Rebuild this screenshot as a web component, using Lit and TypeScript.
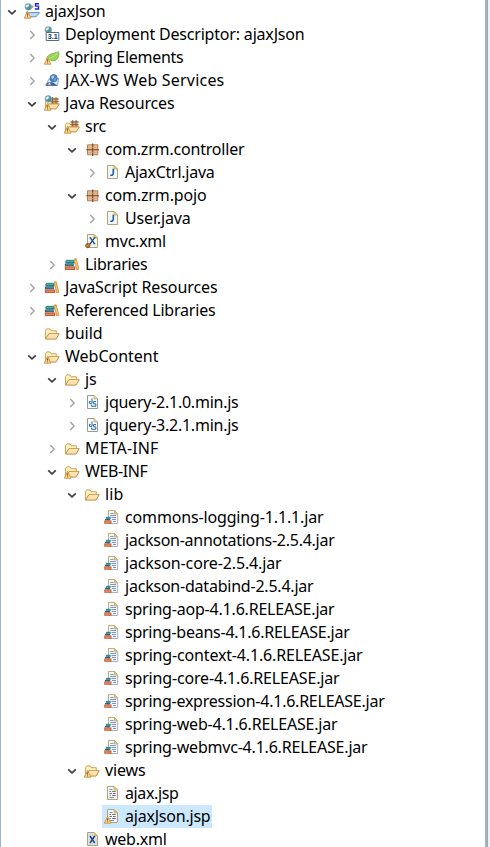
import { LitElement, html, svg, css } from "lit";
import { customElement, property } from "lit/decorators.js";
import { classMap } from "lit/directives/class-map.js";

const warn = svg`<path d="M3.6 8.4 L7 15.2 H.3 Z" fill="#ffd890" stroke="#cf9040" stroke-width=".9" stroke-linejoin="round"/><path d="M3.6 10.3v2.4M3.6 13.4v1" stroke="#8a5314" stroke-width="1"/>`;

const globe = svg`<circle cx="4.3" cy="3.8" r="3.4" fill="#5794bd" stroke="#8fb0c6" stroke-width=".6"/><path d="M2 2.2 L4.5 1 L5 3 L3 4.6 L1.6 4Z" fill="#e4f0cb"/><path d="M4.8 4.4 L7.2 3.6 L6.4 6.2 L4.6 6.7Z" fill="#4b9554"/>`;

const folder = svg`<g transform="translate(0 1.4)"><path d="M1.5 12.5 V4 L2.8 2.5 H6 L7 4.3 H12.3 V7" fill="#fff0bd" stroke="#cfa45c"/><path d="M1.5 12.7 L4.8 7.3 H15.2 L12 12.7 Z" fill="#fbe2ac" stroke="#c48d45" stroke-linejoin="round"/><path d="M5.3 8.4H13.4" stroke="#fff1c7"/></g>`;

const sourceFolder = svg`<g transform="translate(0 1.2)"><path d="M1.5 12.5V5.3L2.7 4H5.2L6.2 5.2H8" fill="#fff0bd" stroke="#cfa45c"/><path d="M7 1.8H14V8H7Z" fill="#e0b488"/><path d="M6.3 2.8H14.8M6.3 5.5H14.8M8.7 .8V8M12 .8V8" stroke="#805238" stroke-width=".9"/><path d="M1.5 12.7 L4.5 7.7 H15.4 L12.2 12.7 Z" fill="#fbe2ac" stroke="#c48d45" stroke-linejoin="round"/></g>`;

const page = svg`<path d="M3.5 1.5H10L13.5 5V14.5H3.5Z" fill="#f1f6fc" stroke="#b3a468"/><path d="M10 1.5V5H13.5Z" fill="#e9cb7d" stroke="#c5a250" stroke-width=".7"/>`;

const books = svg`<path d="M2.4 4.2H9.6L10.4 7.2H2.4L1.5 5.8Z" fill="#178c83" stroke="#28706b" stroke-width=".6"/><path d="M.9 7.5H9.6L10 10.2H.9Z" fill="#36577d"/><path d="M.8 10.4H11.2V14H.8Z" fill="#c55d34"/><path d="M2.4 5.7H9M2 8.8H9" stroke="#70bcb1" stroke-width=".7"/><path d="M2 12.2H10" stroke="#efb18b" stroke-width=".8"/><path d="M10 3.2L12.1 2.6L14.9 13.2L12.8 13.9Z" fill="#f3b349" stroke="#c88134" stroke-width=".7"/><path d="M11.3 4.5L13.7 12.7" stroke="#ffda86" stroke-width=".7"/>`;

const icons: Record<string, unknown> = {
  project: svg`${globe}<path d="M7.4 3.7H9.2" stroke="#a88655" stroke-width="2"/><path d="M15 .7H11.5V3.1H14.5V6H10.8" fill="none" stroke="#1a29d6" stroke-width="1.4"/><path d="M2 9.6H15.5L12 13.8H5Z" fill="#bedbf2" stroke="#5489b8" stroke-width=".9"/>${warn}`,
  descriptor: svg`${globe}<path d="M2.2 6.5H14.8V14.5H2.2Z" fill="#fafcff" stroke="#536b91"/><text class="version" x="3.7" y="13.2">3.1</text>`,
  spring: svg`<path d="M2.6 11.7C2.4 6.4 5.8 5.1 9 4.4C11.5 3.9 13.3 3.1 14.6 2.6C15.6 6.3 14.5 10 11 11.4C8 12.5 5.4 10.4 4.2 10.6Z" fill="#98d555" stroke="#78b840" stroke-width=".8"/><path d="M4 10.4C7.6 9 10 7.5 13.5 4.3" stroke="#cbeb9b" fill="none" stroke-width=".9"/>${warn}`,
  webservice: svg`<path d="M1.6 13.2L5.2 6.8L8 10L14.8 6.2L13.4 13.5Z" fill="#dbe9f7" stroke="#7797ba" stroke-width=".8"/><circle cx="9.6" cy="6.2" r="3.7" fill="#4a82c5" stroke="#416fa9" stroke-width=".7"/><path d="M7.2 5L9 3.2L10.4 5.1L8.3 7Z" fill="#b8dff0"/><path d="M10.1 7.1L12.3 5.7L11.8 8.4L10 9Z" fill="#72a8cf"/><path d="M1.6 13.8L3.8 10.2H8.5L13.8 13.8Z" fill="#3c6297"/><path d="M3.5 12.8L5.5 10.4L7.2 12.8Z" fill="#d7e6f3"/>`,
  javaresources: svg`${sourceFolder}${globe}${warn}`,
  src: svg`${sourceFolder}${warn}`,
  package: svg`<path d="M3.5 3.8H13.8V13.8H3.5Z" fill="#e6be94" stroke="#b38259"/><path d="M8.7 2.6V15M2.3 8.8H15" stroke="#754026" stroke-width="1.1"/><path d="M4.5 6.2H13M4.5 11.4H13" stroke="#cf9f72" stroke-width=".7"/>`,
  java: svg`${page}<path d="M9.3 4.8V9C9.3 10.8 8.3 11.6 6.3 11.2" fill="none" stroke="#205c98" stroke-width="1.6"/>`,
  springxml: svg`${page}<path d="M6.2 4.7L10.6 10.8M10.6 4.7L6.2 10.8" stroke="#244877" stroke-width="1.3"/><path d="M5.3 4.7H7.2M9.7 4.7H11.5M5.3 10.8H7.2M9.7 10.8H11.5" stroke="#244877" stroke-width=".8"/><circle cx="3.8" cy="12.6" r="2.2" fill="#a5672f" stroke="#754018" stroke-width=".7"/><path d="M1.8 14.3L5.5 10.9M2 11.4L5.7 14.1" stroke="#d59a5e" stroke-width=".7"/>`,
  xml: svg`${page}<path d="M4 2H9.7V5.5H13V14H4Z" fill="#d4e1f1"/><path d="M6 5L10.7 12M10.7 5L6 12" stroke="#234777" stroke-width="1.5"/>`,
  javascript: svg`<path d="M3.5 1.5H10L13.5 5V14.5H3.5Z" fill="#f8fbff" stroke="#929c91"/><path d="M10 1.5V5H13.5" fill="#eed08a" stroke="#c5a251" stroke-width=".7"/><path d="M8 4.5V9.3H5.4V7.4H6.7" fill="none" stroke="#26669c"/><path d="M12 7.5H9.6V9.8H11.8V12.3H7.6V10.5" fill="none" stroke="#26669c"/>`,
  folder,
  warningfolder: svg`${folder}${warn}`,
  libraries: books,
  jar: svg`<path d="M4.5 1.5H10.5L13.7 5V14.5H4.5Z" fill="#f4f8fd" stroke="#a8b0b9"/><path d="M4.5 7V1.5H10.5" fill="none" stroke="#c6af6b"/><path d="M10.5 1.5V5H13.7Z" fill="#e6cb83" stroke="#c5a250" stroke-width=".7"/><path d="M6.3 4.5H9.5M6.3 6.5H12M7.5 8.5H12M8 10.5H12M9 12.5H12" stroke="#6f86bd" stroke-width=".9"/><path d="M2 7.8H6.7V9.8H2Z" fill="#27928a"/><path d="M1 9.8H6.2V11.5H1Z" fill="#3c5d83"/><path d="M.2 11.5H7.5V14.8H.2Z" fill="#cc653a"/><path d="M1.3 13.1H6.4" stroke="#f0b18a" stroke-width=".8"/>`,
  jsp: svg`${page}<path d="M5.5 4.5H8.5M5.5 10.5H7M5.5 12.5H10" stroke="#6883b3" stroke-width=".9"/><path d="M5.5 6.5H7M9 8.5H11.7" stroke="#db4460"/><path d="M8 6.5H11.7M5.5 8.5H8" stroke="#528c62"/><path d="M8.2 10.5H11.8" stroke="#526ec0"/>`,
};
icons.warningjsp = svg`${icons.jsp}${warn}`;

type State = "open" | "closed" | "leaf";

interface Node {
  level: number;
  state: State;
  icon: string;
  label: string;
  end: number;
  selected?: boolean;
}

const n = (level: number, state: State, icon: string, label: string, end: number, selected = false): Node =>
  ({ level, state, icon, label, end, selected });

const nodes: Node[] = [
  n(0, "open", "project", "ajaxJson", 105.5),
  n(1, "closed", "descriptor", "Deployment Descriptor: ajaxJson", 304.5),
  n(1, "closed", "spring", "Spring Elements", 183.5),
  n(1, "closed", "webservice", "JAX-WS Web Services", 224.5),
  n(1, "open", "javaresources", "Java Resources", 174.5),
  n(2, "open", "src", "src", 106),
  n(3, "open", "package", "com.zrm.controller", 244.5),
  n(4, "closed", "java", "AjaxCtrl.java", 214.5),
  n(3, "open", "package", "com.zrm.pojo", 206.5),
  n(4, "closed", "java", "User.java", 190.5),
  n(3, "leaf", "springxml", "mvc.xml", 166),
  n(2, "closed", "libraries", "Libraries", 147.5),
  n(1, "closed", "libraries", "JavaScript Resources", 217.5),
  n(1, "closed", "libraries", "Referenced Libraries", 215.5),
  n(1, "leaf", "folder", "build", 102.5),
  n(1, "open", "warningfolder", "WebContent", 158.5),
  n(2, "open", "folder", "js", 96.5),
  n(3, "closed", "javascript", "jquery-2.1.0.min.js", 238.5),
  n(3, "closed", "javascript", "jquery-3.2.1.min.js", 238.5),
  n(2, "closed", "folder", "META-INF", 158.5),
  n(2, "open", "warningfolder", "WEB-INF", 147.5),
  n(3, "open", "folder", "lib", 123.5),
  n(4, "leaf", "jar", "commons-logging-1.1.1.jar", 323.5),
  n(4, "leaf", "jar", "jackson-annotations-2.5.4.jar", 334.5),
  n(4, "leaf", "jar", "jackson-core-2.5.4.jar", 281.5),
  n(4, "leaf", "jar", "jackson-databind-2.5.4.jar", 313.5),
  n(4, "leaf", "jar", "spring-aop-4.1.6.RELEASE.jar", 334.5),
  n(4, "leaf", "jar", "spring-beans-4.1.6.RELEASE.jar", 349.5),
  n(4, "leaf", "jar", "spring-context-4.1.6.RELEASE.jar", 362.5),
  n(4, "leaf", "jar", "spring-core-4.1.6.RELEASE.jar", 339.5),
  n(4, "leaf", "jar", "spring-expression-4.1.6.RELEASE.jar", 384.5),
  n(4, "leaf", "jar", "spring-web-4.1.6.RELEASE.jar", 337.5),
  n(4, "leaf", "jar", "spring-webmvc-4.1.6.RELEASE.jar", 367.5),
  n(3, "open", "warningfolder", "views", 145.5),
  n(4, "leaf", "jsp", "ajax.jsp", 178.5),
  n(4, "leaf", "warningjsp", "ajaxJson.jsp", 210.5, true),
  n(3, "leaf", "xml", "web.xml", 166.5),
];

@customElement("tree-row")
class TreeRow extends LitElement {
  @property({ attribute: false }) node!: Node;

  static styles = css`
    :host { display: flex; height: 23px; flex: none; }
    .indent { flex: none; }
    .chevron { width: 10px; height: 10px; flex: none; margin: 7px 5.5px 0 4.5px; fill: none; stroke: #a6a6a6; stroke-width: 1.5; }
    .chevron.open { stroke: #404040; stroke-width: 1.7; }
    .content { display: flex; height: 23px; padding-right: 1.5px; }
    .selected { background: #cce8ff; }
    .icon { width: 16px; height: 16px; flex: none; margin: 3px 5px 0 2px; }
    .label { font: 16px/23px "Noto Sans", "Open Sans", sans-serif; color: #000; white-space: nowrap; }
    .version { font: bold 7.2px "Liberation Sans", sans-serif; fill: #17365f; }
  `;

  firstUpdated() {
    const label = this.renderRoot.querySelector<HTMLElement>(".label")!;
    const target = this.node.end - 45 - this.node.level * 20;
    const spacing = (target - label.getBoundingClientRect().width) / this.node.label.length;
    label.style.letterSpacing = `${spacing}px`;
  }

  render() {
    const { level, state, icon, label, selected } = this.node;
    return html`
      <span class="indent" style="width:${level * 20 + 2}px"></span>
      <svg class=${classMap({ chevron: true, open: state === "open" })} viewBox="0 0 10 10">
        ${state === "open" ? svg`<path d="M1.2 3.4L5 6.9L8.8 3.4"/>` : state === "closed" ? svg`<path d="M3.3 1L7.1 5L3.3 9"/>` : ""}
      </svg>
      <div class=${classMap({ content: true, selected: !!selected })}>
        <svg class="icon" viewBox="0 0 16 16">${icons[icon]}</svg>
        <span class="label">${label}</span>
      </div>
    `;
  }
}

@customElement("app-root")
class AppRoot extends LitElement {
  static styles = css`
    :host { display: flex; height: 847px; overflow: hidden; background: #fff; }
    .edge { width: 1px; background: #99b4d1; flex: none; }
    .tree { flex: 1; min-width: 0; margin-left: -1px; display: flex; flex-direction: column; }
    .divider { width: 2px; flex: none; background: #99b4d1; border-right: 1px solid #a5a9ad; }
    .gutter { width: 2px; flex: none; background: #f0f0f0; }
  `;

  render() {
    return html`
      <div class="edge"></div>
      <div class="tree">${nodes.map((node) => html`<tree-row .node=${node}></tree-row>`)}</div>
      <div class="divider"></div>
      <div class="gutter"></div>
    `;
  }
}
